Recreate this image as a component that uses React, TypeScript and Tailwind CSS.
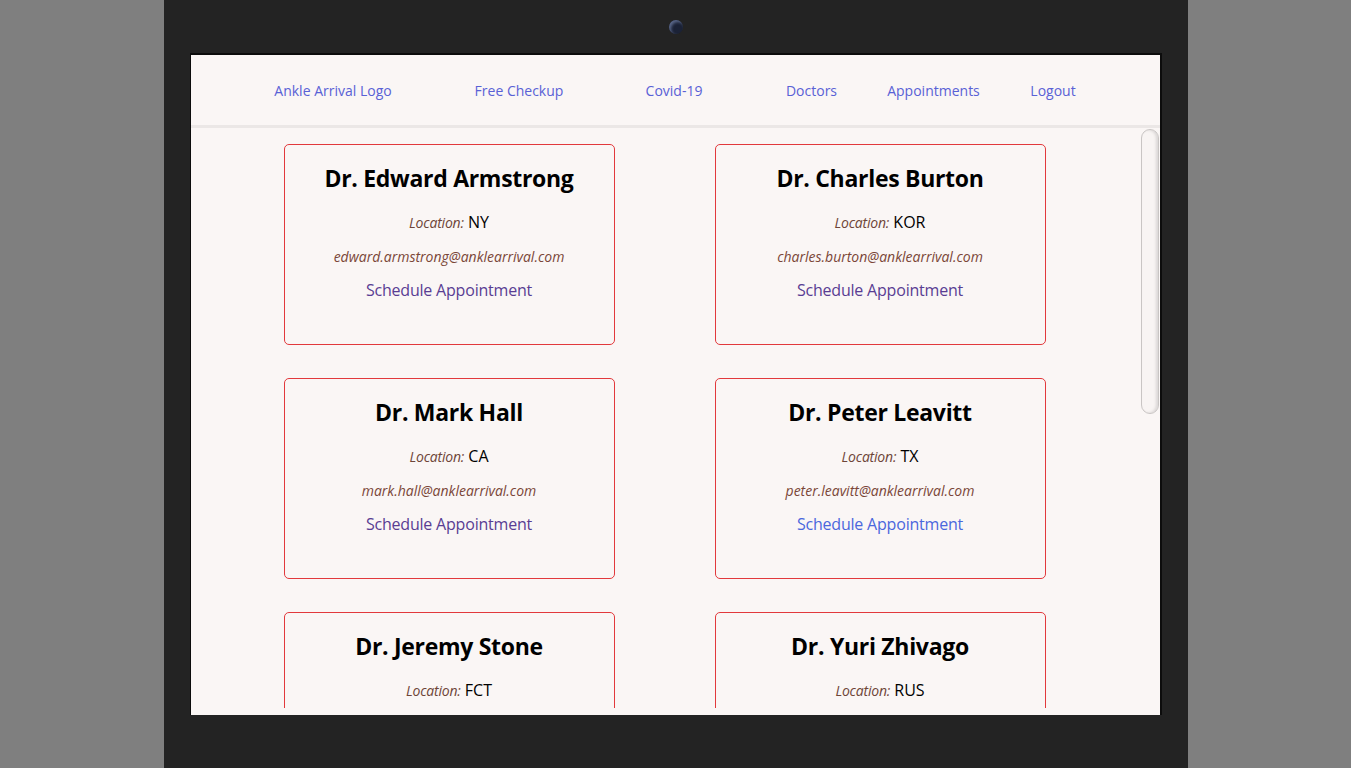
import React from 'react';

type Doctor = {
  name: string;
  location: string;
  email: string;
  visited: boolean;
};

const doctors: Doctor[] = [
  { name: 'Dr. Edward Armstrong', location: 'NY', email: 'edward.armstrong@anklearrival.com', visited: true },
  { name: 'Dr. Charles Burton', location: 'KOR', email: 'charles.burton@anklearrival.com', visited: true },
  { name: 'Dr. Mark Hall', location: 'CA', email: 'mark.hall@anklearrival.com', visited: true },
  { name: 'Dr. Peter Leavitt', location: 'TX', email: 'peter.leavitt@anklearrival.com', visited: false },
  { name: 'Dr. Jeremy Stone', location: 'FCT', email: 'jeremy.stone@anklearrival.com', visited: true },
  { name: 'Dr. Yuri Zhivago', location: 'RUS', email: 'yuri.zhivago@anklearrival.com', visited: true },
];

const navLinks = [
  { label: 'Ankle Arrival Logo', width: 'w-[186px]' },
  { label: 'Free Checkup', width: 'w-[186px]' },
  { label: 'Covid-19', width: 'w-[124px]' },
  { label: 'Doctors', width: 'w-[151px]' },
  { label: 'Appointments', width: 'w-[93px]' },
  { label: 'Logout', width: 'w-[146px]' },
];

function DoctorCard({ doctor }: { doctor: Doctor }) {
  return (
    <div className="flex h-[201px] w-[331px] flex-col items-center rounded-[5px] border border-[#e2393c] pt-[19px]">
      <h2 className="text-[23px] leading-[28px] font-bold tracking-[-0.3px] text-black">{doctor.name}</h2>
      <p className="mt-[18px] leading-[24px]">
        <em className="text-[14px] tracking-[-0.2px] text-[#6e4538]">Location:</em>{' '}
        <span className="text-[16px] text-black">{doctor.location}</span>
      </p>
      <p className="mt-[10px] text-[14px] leading-[24px] text-[#7a4638] italic">{doctor.email}</p>
      <a
        href="#"
        className={`mt-[9px] text-[16px] leading-[24px] tracking-[-0.2px] ${doctor.visited ? 'text-[#593d93]' : 'text-[#4b67dd]'}`}
      >
        Schedule Appointment
      </a>
    </div>
  );
}

export default function App() {
  return (
    <div className="flex h-[768px] w-full justify-center bg-[#7f7f7f] font-['Open_Sans',sans-serif]">
      <div className="flex h-[768px] w-[1024px] flex-col items-center bg-[#232323]">
        <div className="flex h-[53px] w-full items-center justify-center">
          <div className="ml-[1px] h-[14px] w-[14px] rounded-full bg-[#1b2236] shadow-[inset_2px_2px_3px_rgba(150,170,220,0.5)]" />
        </div>
        <div className="ml-[1px] border-t-2 border-r-2 border-l border-[#0c0c0c]">
          <div className="flex h-[660px] w-[969px] flex-col bg-[#faf6f5]">
            <nav className="flex h-[70px] shrink-0 items-center pl-[49px]">
              {navLinks.map((link) => (
                <div key={link.label} className={`flex justify-center ${link.width}`}>
                  <a href="#" className="text-[14px] whitespace-nowrap text-[#5961d6]">
                    {link.label}
                  </a>
                </div>
              ))}
            </nav>
            <div className="h-[3px] shrink-0 bg-[#ebe7e6]" />
            <div className="flex h-[580px] shrink-0">
              <div className="flex-1 overflow-hidden pr-[2px]">
                <div className="grid grid-cols-[331px_331px] justify-center gap-x-[100px] gap-y-[33px] pt-[16px]">
                  {doctors.map((d) => (
                    <DoctorCard key={d.name} doctor={d} />
                  ))}
                </div>
              </div>
              <div className="flex w-[20px] flex-col items-center pt-[1px]">
                <div className="h-[285px] w-[18px] rounded-full border border-[#c9c5c4] bg-[#f8f4f3] shadow-[inset_-2px_0_3px_rgba(0,0,0,0.12)]" />
              </div>
            </div>
          </div>
        </div>
      </div>
    </div>
  );
}
